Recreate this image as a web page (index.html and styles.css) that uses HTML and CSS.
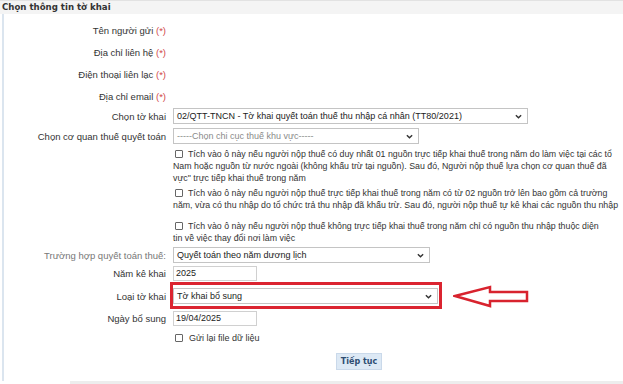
FILE: index.html
```html
<!DOCTYPE html>
<html lang="vi">
<head>
  <meta charset="UTF-8">
  <meta name="viewport" content="width=device-width, initial-scale=1.0">
  <title>Chọn thông tin tờ khai</title>
  <link rel="stylesheet" href="styles.css">
</head>
<body>
  <div class="page">
    <div class="title">Chọn thông tin tờ khai</div>

    <div class="panel">
      <div class="row row-text">
        <div class="lbl">Tên người gửi <span class="req">(*)</span></div>
      </div>
      <div class="row row-text">
        <div class="lbl">Địa chỉ liên hệ <span class="req">(*)</span></div>
      </div>
      <div class="row row-text">
        <div class="lbl">Điện thoại liên lạc <span class="req">(*)</span></div>
      </div>
      <div class="row row-text">
        <div class="lbl">Địa chỉ email <span class="req">(*)</span></div>
      </div>

      <div class="row row-field">
        <div class="lbl">Chọn tờ khai</div>
        <div class="val">
          <div class="select w-form">
            <span>02/QTT-TNCN - Tờ khai quyết toán thuế thu nhập cá nhân (TT80/2021)</span>
            <svg class="chev" viewBox="0 0 8 5"><path d="M1 1l3 3 3-3"/></svg>
          </div>
        </div>
      </div>
      <div class="row row-field gap2">
        <div class="lbl">Chọn cơ quan thuế quyết toán</div>
        <div class="val">
          <div class="select w-office placeholder">
            <span>-----Chọn chi cục thuế khu vực-----</span>
            <svg class="chev" viewBox="0 0 8 5"><path d="M1 1l3 3 3-3"/></svg>
          </div>
        </div>
      </div>

      <!-- các lựa chọn nguồn thu nhập -->
      <div class="row row-check">
        <div class="lbl"></div>
        <div class="val check-text">
          <span class="line"><span class="box"></span>Tích vào ô này nếu người nộp thuế có duy nhất 01 nguồn trực tiếp khai thuế trong năm do làm việc tại các tổ</span>
          <span class="line">Nam hoặc nguồn từ nước ngoài (không khấu trừ tại nguồn). Sau đó, Người nộp thuế lựa chọn cơ quan thuế đã</span>
          <span class="line">vực" trực tiếp khai thuế trong năm</span>
        </div>
      </div>
      <div class="row row-check">
        <div class="lbl"></div>
        <div class="val check-text">
          <span class="line"><span class="box"></span>Tích vào ô này nếu người nộp thuế trực tiếp khai thuế trong năm có từ 02 nguồn trở lên bao gồm cả trường</span>
          <span class="line">năm, vừa có thu nhập do tổ chức trả thu nhập đã khấu trừ. Sau đó, người nộp thuế tự kê khai các nguồn thu nhập</span>
        </div>
      </div>
      <div class="row row-check wide">
        <div class="lbl"></div>
        <div class="val check-text">
          <span class="line"><span class="box"></span>Tích vào ô này nếu người nộp thuế không trực tiếp khai thuế trong năm chỉ có nguồn thu nhập thuộc diện</span>
          <span class="line">tin về việc thay đổi nơi làm việc</span>
        </div>
      </div>

      <div class="row row-field gap2">
        <div class="lbl muted">Trường hợp quyết toán thuế:</div>
        <div class="val">
          <div class="select w-case">
            <span>Quyết toán theo năm dương lịch</span>
            <svg class="chev" viewBox="0 0 8 5"><path d="M1 1l3 3 3-3"/></svg>
          </div>
        </div>
      </div>
      <div class="row row-field">
        <div class="lbl">Năm kê khai</div>
        <div class="val"><div class="input">2025</div></div>
      </div>
      <div class="row row-field gap5">
        <div class="lbl">Loại tờ khai</div>
        <div class="val">
          <div class="highlight">
            <div class="select w-type">
              <span>Tờ khai bổ sung</span>
              <svg class="chev" viewBox="0 0 8 5"><path d="M1 1l3 3 3-3"/></svg>
            </div>
          </div>
        </div>
      </div>
      <div class="row row-field gap4">
        <div class="lbl">Ngày bổ sung</div>
        <div class="val"><div class="input">19/04/2025</div></div>
      </div>
      <div class="row row-field gap2">
        <div class="lbl"></div>
        <div class="val resend"><span class="box"></span>Gửi lại file dữ liệu</div>
      </div>
      <div class="row row-btn">
        <button class="btn">Tiếp tục</button>
      </div>
    </div>

    <div class="foot"></div>

    <!-- mũi tên chú thích -->
    <svg class="arrow" viewBox="0 0 80 24">
      <path d="M2 11 L37 2 L37 7 L74 7 L74 16 L37 16 L37 21 Z"/>
    </svg>
  </div>
</body>
</html>
```

FILE: styles.css
```css
html, body {
  margin: 0;
  padding: 0;
  overflow: hidden;
  background: #fff;
}
body {
  font-family: "Liberation Sans", Arial, sans-serif;
  font-size: 9px;
  color: #333;
}
.page {
  position: relative;
  width: 623px;
  height: 384px;
  overflow: hidden;
}
.title {
  height: 13px;
  line-height: 13px;
  padding-left: 2px;
  background: #f4f4f4;
  border-top: 1px solid #e2e2e2;
  font-family: "DejaVu Sans", Verdana, sans-serif;
  font-weight: bold;
  font-size: 8.6px;
  color: #333;
}
.panel {
  margin-left: 2px;
  border-left: 2px solid #dbe5ef;
  padding-top: 5px;
  height: 362px;
}
.row {
  display: flex;
  align-items: center;
}
.lbl {
  flex: none;
  width: 162px;
  text-align: right;
  white-space: nowrap;
  font-size: 9.5px;
}
.val {
  margin-left: 7px;
  white-space: nowrap;
}
.req {
  color: #d24a4a;
}
.muted {
  color: #777;
}
.row-text {
  height: 22px;
}
.row-field {
  height: 18px;
}
.gap2 { margin-top: 2px; }
.gap4 { margin-top: 4px; }
.gap5 { margin-top: 5px; }

.select {
  display: flex;
  align-items: center;
  justify-content: space-between;
  box-sizing: border-box;
  height: 16px;
  padding: 0 5px 0 3px;
  border: 1px solid #c4c4c4;
  background: #fff;
  color: #222;
}
.placeholder {
  color: #8a8a8a;
}
.w-form { width: 355px; }
.w-office { width: 246px; }
.w-case { width: 257px; }
.w-type { width: 265px; }
.chev {
  width: 7px;
  height: 5px;
  fill: none;
  stroke: #333;
  stroke-width: 1.6;
}
.input {
  box-sizing: border-box;
  width: 84px;
  height: 15px;
  line-height: 13px;
  padding-left: 2px;
  border: 1px solid #d0d0d0;
  color: #222;
}
.highlight {
  position: relative;
}
.highlight::after {
  content: "";
  position: absolute;
  top: -6px;
  bottom: -5px;
  left: -3px;
  right: -4px;
  border: 3px solid #db2430;
}

.row-check {
  align-items: flex-start;
  margin-top: 3px;
}
.row-check.wide { margin-top: 9px; }
.check-text {
  display: flex;
  flex-direction: column;
  line-height: 12px;
  font-size: 8.8px;
  color: #333;
}
.box {
  display: inline-block;
  box-sizing: border-box;
  width: 8px;
  height: 8px;
  margin: 0 5px 0 2px;
  border: 1px solid #666;
  border-radius: 1px;
  vertical-align: -1px;
}
.resend .box {
  margin-right: 6px;
}

.row-btn {
  margin-top: 6px;
  padding-left: 332px;
}
.btn {
  width: 46px;
  height: 17px;
  padding: 0;
  border: 1px solid #cad9ea;
  background: #dde9f5;
  font-family: "DejaVu Sans", Verdana, sans-serif;
  font-weight: bold;
  font-size: 8px;
  color: #2e4d72;
  cursor: pointer;
}
.foot {
  margin-left: 70px;
  height: 3px;
  background: #ededed;
}
.arrow {
  position: absolute;
  left: 453px;
  top: 285px;
  width: 80px;
  height: 24px;
  fill: #fff;
  stroke: #d8232e;
  stroke-width: 2.5;
}
```
